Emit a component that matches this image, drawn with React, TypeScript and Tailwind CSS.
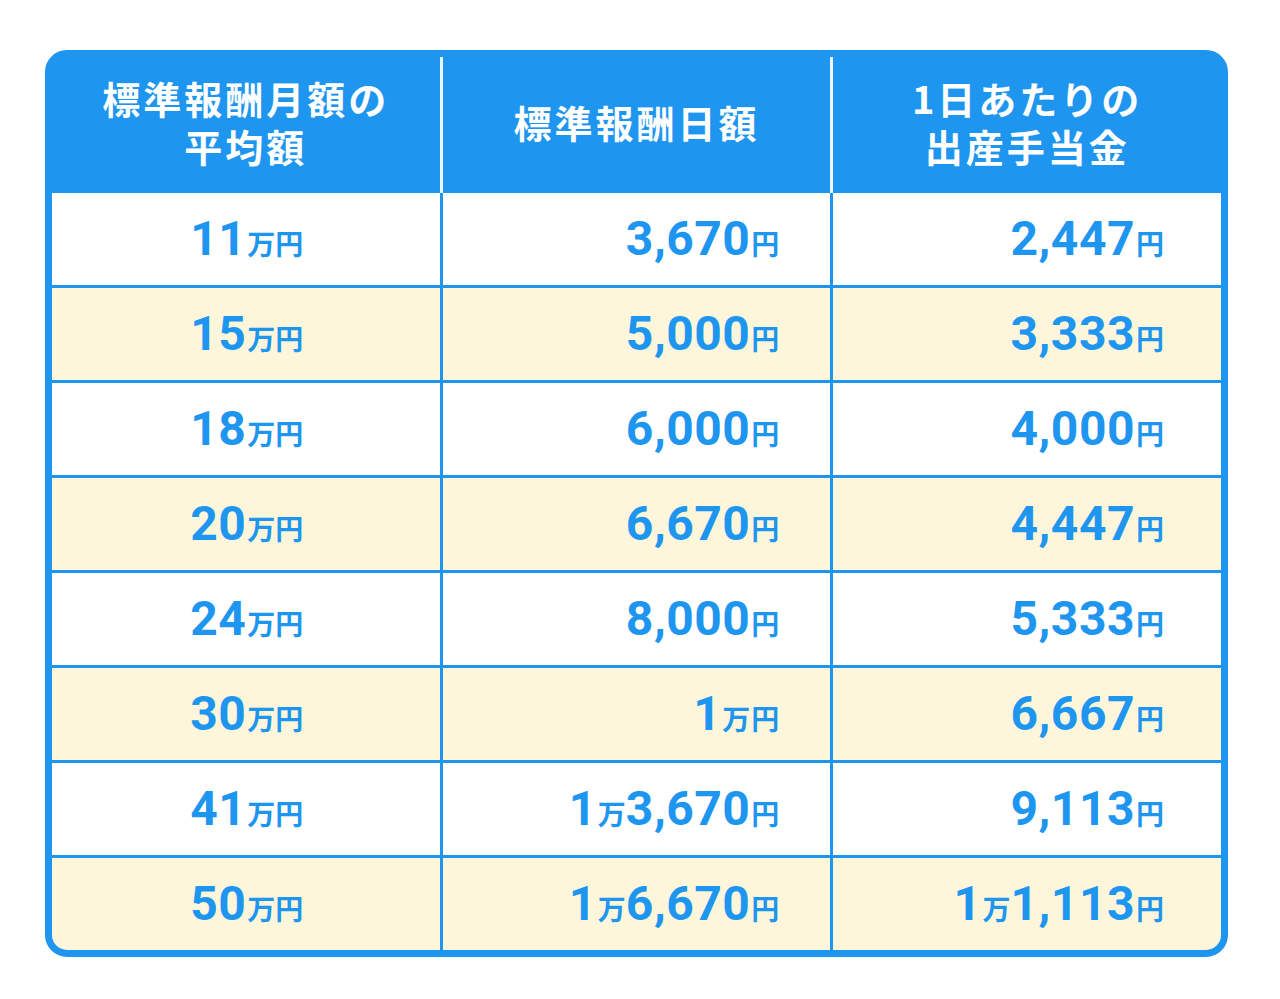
const rows = [
  { avg: "11", day: [null, "3,670"], pay: [null, "2,447"] },
  { avg: "15", day: [null, "5,000"], pay: [null, "3,333"] },
  { avg: "18", day: [null, "6,000"], pay: [null, "4,000"] },
  { avg: "20", day: [null, "6,670"], pay: [null, "4,447"] },
  { avg: "24", day: [null, "8,000"], pay: [null, "5,333"] },
  { avg: "30", day: ["1", null], pay: [null, "6,667"] },
  { avg: "41", day: ["1", "3,670"], pay: [null, "9,113"] },
  { avg: "50", day: ["1", "6,670"], pay: ["1", "1,113"] },
];

const num = "font-['Roboto','Liberation_Sans',sans-serif] font-bold text-[48px] leading-none tracking-[0.5px]";
const unit = "font-['Noto_Sans_CJK_JP',sans-serif] font-bold text-[28px] leading-none ml-[1px]";

const Amount = ({ v }: { v: (string | null)[] }) => {
  const [man, rest] = v;
  return (
    <span className="flex items-baseline">
      {man && <span className={num}>{man}</span>}
      {man && <span className={unit}>万</span>}
      {rest && <span className={num}>{rest}</span>}
      <span className={unit}>円</span>
    </span>
  );
};

const App = () => {
  return (
    <div className="min-h-[999px] w-[1280px] bg-white pt-[50px] pl-[45px]">
      <div className="w-[1183px] rounded-[22px] border-[7px] border-[#1e96f0] bg-[#1e96f0] overflow-hidden text-[#1e96f0]">
        <div className="grid grid-cols-3 gap-x-[3px] h-[136px]">
          {[
            ["標準報酬月額の", "平均額"],
            ["標準報酬日額"],
            ["1日あたりの", "出産手当金"],
          ].map((lines, i) => (
            <div
              key={i}
              className={`flex flex-col items-center justify-center text-white font-['Noto_Sans_CJK_JP',sans-serif] font-bold text-[38px] leading-[48px] tracking-[3px] pb-[6px] ${i > 0 ? "shadow-[-3px_0_0_#eaf5fe]" : ""}`}
            >
              {lines.map((l) => (
                <div key={l}>{l}</div>
              ))}
            </div>
          ))}
        </div>
        <div className="grid grid-cols-3 gap-[3px]">
          {rows.map((r, i) => {
            const bg = i % 2 === 0 ? "bg-white" : "bg-[#fdf6da]";
            return [
              <div key={`a${i}`} className={`${bg} h-[92px] flex items-center justify-center pl-[2px]`}>
                <span className="flex items-baseline">
                  <span className={num}>{r.avg}</span>
                  <span className={unit}>万円</span>
                </span>
              </div>,
              <div key={`b${i}`} className={`${bg} h-[92px] flex items-center justify-end pr-[51px]`}>
                <Amount v={r.day} />
              </div>,
              <div key={`c${i}`} className={`${bg} h-[92px] flex items-center justify-end pr-[57px]`}>
                <Amount v={r.pay} />
              </div>,
            ];
          })}
        </div>
      </div>
    </div>
  );
};

export default App;
